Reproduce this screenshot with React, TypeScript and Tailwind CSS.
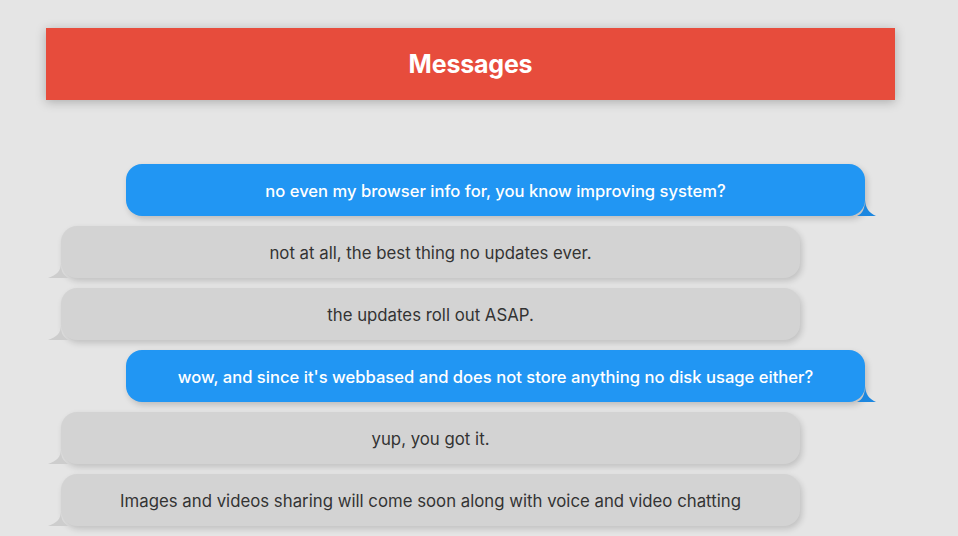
const messages: { text: string; mine: boolean }[] = [
  { text: "no even my browser info for, you know improving system?", mine: true },
  { text: "not at all, the best thing no updates ever.", mine: false },
  { text: "the updates roll out ASAP.", mine: false },
  { text: "wow, and since it's webbased and does not store anything no disk usage either?", mine: true },
  { text: "yup, you got it.", mine: false },
  { text: "Images and videos sharing will come soon along with voice and video chatting", mine: false },
];

function Bubble({ text, mine }: { text: string; mine: boolean }) {
  if (mine) {
    return (
      <div className="relative self-end mr-[30px] w-[739px] h-[52px] pt-[3px] rounded-[16px] bg-[#2196f3] text-white flex items-center justify-center shadow-[2px_3px_6px_rgba(0,0,0,0.18)]">
        <span className="font-medium text-[16.6px]">{text}</span>
        <svg className="absolute right-[-11px] bottom-0" width="21" height="17" viewBox="0 0 21 17">
          <path d="M10 1 C10.5 9 14 14 21 17 L2 17 C7 15 10 10 10 1 Z" fill="#1c87e0" />
        </svg>
      </div>
    );
  }
  return (
    <div className="relative ml-[15px] w-[739px] h-[52px] pt-[3px] rounded-[16px] bg-[#d3d3d3] text-[#333] flex items-center justify-center shadow-[2px_3px_6px_rgba(0,0,0,0.16)]">
      <span>{text}</span>
      <svg className="absolute left-[-13px] bottom-0" width="23" height="15" viewBox="0 0 23 15">
        <path d="M13 1 C12.5 8 9 12 0 15 L21 15 C16 13 13 9 13 1 Z" fill="#cdcdcd" />
      </svg>
    </div>
  );
}

export default function App() {
  return (
    <main className="min-h-[536px] bg-[#e5e5e5] pt-[28px] font-['Inter','Noto_Sans',sans-serif] text-[16.8px] overflow-hidden">
      <div className="ml-[46px] w-[849px] flex flex-col">
        <header className="h-[72px] pt-[2px] bg-[#e74c3c] flex items-center justify-center shadow-[0_2px_10px_rgba(0,0,0,0.25)]">
          <h1 className="text-white text-[25px] font-bold tracking-[-0.2px]">Messages</h1>
        </header>
        <div className="mt-[64px] flex flex-col gap-[10px]">
          {messages.map((m, i) => (
            <Bubble key={i} text={m.text} mine={m.mine} />
          ))}
        </div>
      </div>
    </main>
  );
}
